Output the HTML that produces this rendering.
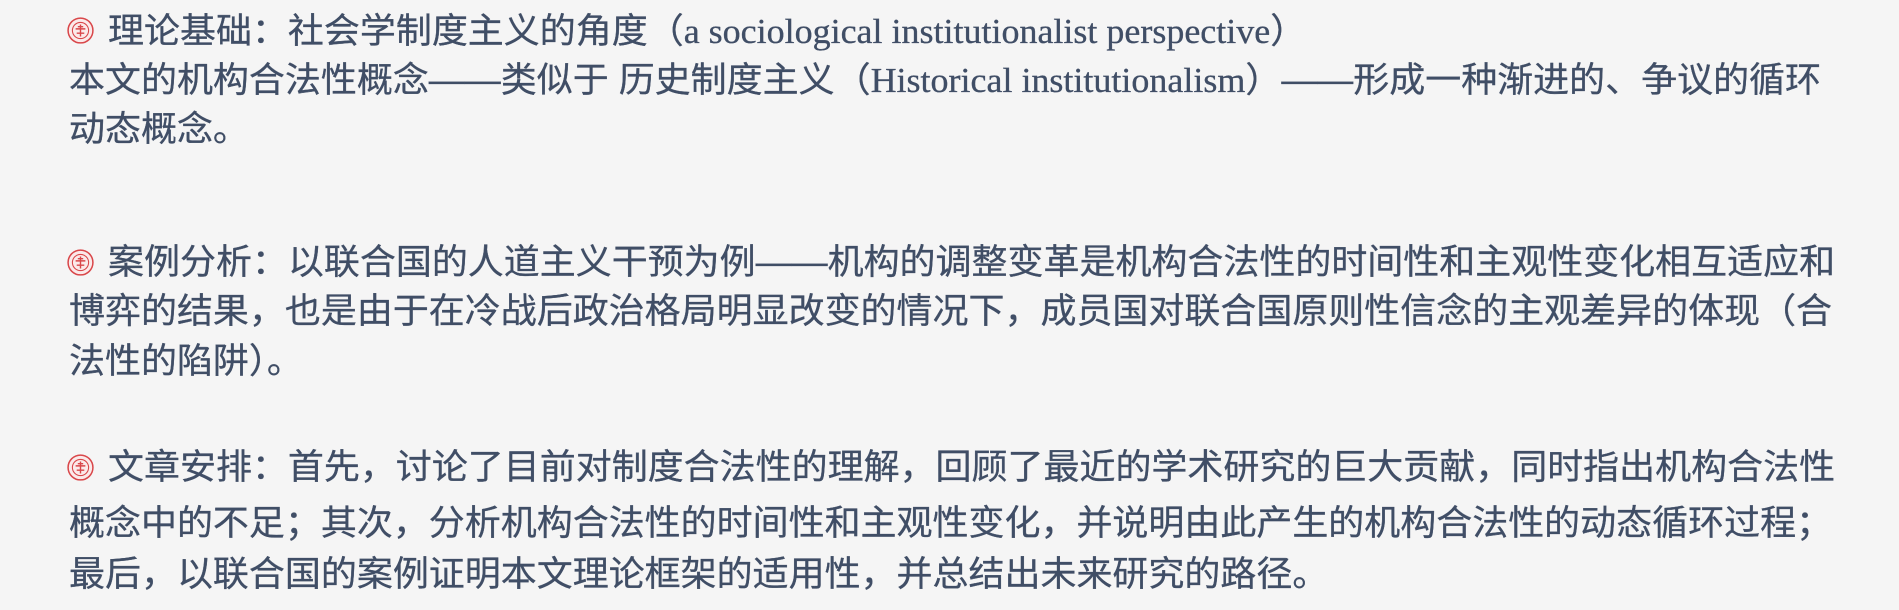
<!DOCTYPE html>
<html><head><meta charset="utf-8"><style>
html,body{margin:0;padding:0;}
body{width:1899px;height:610px;background:#f5f5f5;position:relative;overflow:hidden;
font-family:"Liberation Sans","Noto Sans CJK SC",sans-serif;color:#404e66;}
.l{position:absolute;left:69px;height:40px;line-height:40px;font-size:35px;white-space:nowrap;transform:scaleX(1.028);transform-origin:0 50%;-webkit-text-stroke:0.3px #404e66;}
.s{font-family:"Liberation Serif","Noto Serif CJK SC",serif;font-size:35px;}
.ic{position:absolute;left:67px;width:27px;height:27px;}
</style></head><body>
<svg class="ic" style="top:17px" viewBox="0 0 25 25"><circle cx="12.5" cy="12.5" r="11.5" fill="#fbeaea" stroke="#d9474a" stroke-width="1.4"/><circle cx="12.5" cy="12.5" r="7.5" fill="none" stroke="#d9474a" stroke-width="1"/><path d="M8 11h9M12.5 7v11M9 15h7M10 9l5 0" stroke="#d9474a" stroke-width="1.3" fill="none"/></svg>
<div class="l" style="top:12px;left:108px">理论基础：社会学制度主义的角度（<span class="s">a sociological institutionalist perspective</span>）</div>
<div class="l" style="top:61px">本文的机构合法性概念——类似于 历史制度主义（<span class="s">Historical institutionalism</span>）——形成一种渐进的、争议的循环</div>
<div class="l" style="top:110px">动态概念。</div>

<svg class="ic" style="top:249px" viewBox="0 0 25 25"><circle cx="12.5" cy="12.5" r="11.5" fill="#fbeaea" stroke="#d9474a" stroke-width="1.4"/><circle cx="12.5" cy="12.5" r="7.5" fill="none" stroke="#d9474a" stroke-width="1"/><path d="M8 11h9M12.5 7v11M9 15h7M10 9l5 0" stroke="#d9474a" stroke-width="1.3" fill="none"/></svg>
<div class="l" style="top:243px;left:108px">案例分析：以联合国的人道主义干预为例——机构的调整变革是机构合法性的时间性和主观性变化相互适应和</div>
<div class="l" style="top:292px">博弈的结果，也是由于在冷战后政治格局明显改变的情况下，成员国对联合国原则性信念的主观差异的体现（合</div>
<div class="l" style="top:342px">法性的陷阱）。</div>

<svg class="ic" style="top:454px" viewBox="0 0 25 25"><circle cx="12.5" cy="12.5" r="11.5" fill="#fbeaea" stroke="#d9474a" stroke-width="1.4"/><circle cx="12.5" cy="12.5" r="7.5" fill="none" stroke="#d9474a" stroke-width="1"/><path d="M8 11h9M12.5 7v11M9 15h7M10 9l5 0" stroke="#d9474a" stroke-width="1.3" fill="none"/></svg>
<div class="l" style="top:448px;left:108px">文章安排：首先，讨论了目前对制度合法性的理解，回顾了最近的学术研究的巨大贡献，同时指出机构合法性</div>
<div class="l" style="top:504px">概念中的不足；其次，分析机构合法性的时间性和主观性变化，并说明由此产生的机构合法性的动态循环过程；</div>
<div class="l" style="top:555px">最后，以联合国的案例证明本文理论框架的适用性，并总结出未来研究的路径。</div>
</body></html>
